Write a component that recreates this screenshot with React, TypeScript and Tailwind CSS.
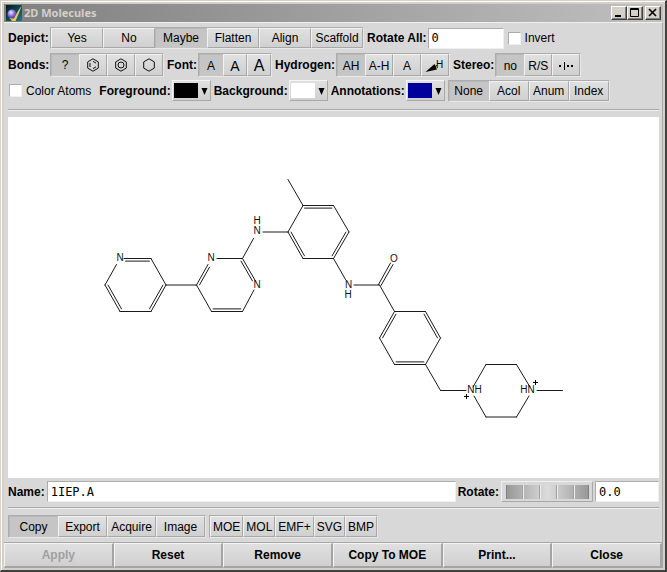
import React, { useState } from "react";
import { clsx } from "clsx";

const SANS = "font-['Liberation_Sans',Arial,sans-serif]";
const MONO = "font-['DejaVu_Sans_Mono','Liberation_Mono',monospace]";
const FIELD =
  "h-[21px] min-w-0 border border-t-[#acacac] border-l-[#acacac] border-b-[#f0f0f0] border-r-[#f0f0f0] bg-white px-[3px] text-[12px] leading-4 text-black outline-none";

type Item = { id: string; face?: React.ReactNode };

function ToggleGroup({
  label,
  items,
  initial,
  itemClass,
  groupClass,
}: {
  label: string;
  items: Item[];
  initial?: string;
  itemClass: string;
  groupClass: string;
}) {
  const [active, setActive] = useState(initial);
  return (
    <div
      role="group"
      aria-label={label}
      className={clsx("flex shrink-0 border border-t-[#acacac] border-l-[#acacac] border-b-[#e8e8e8] border-r-[#e8e8e8]", groupClass)}
    >
      {items.map((item) => (
        <button
          key={item.id}
          type="button"
          aria-label={item.id}
          aria-pressed={item.id === active}
          onClick={() => setActive(item.id)}
          className={clsx(
            "flex items-center justify-center border whitespace-nowrap",
            itemClass,
            item.id === active
              ? "border-[#c6c6c6] border-t-[#b8b8b8] border-l-[#b8b8b8] bg-[#c5c5c5]"
              : "border-t-[#f2f2f2] border-l-[#f2f2f2] border-b-[#a8a8a8] border-r-[#a8a8a8] bg-linear-to-b from-[#e0e0e0] to-[#d0d0d0]",
          )}
        >
          {item.face ?? item.id}
        </button>
      ))}
    </div>
  );
}

function Labelled({ text, textClass, children }: { text: string; textClass?: string; children: React.ReactNode }) {
  return (
    <div className="flex items-center gap-px">
      <span className={clsx("font-bold whitespace-nowrap", textClass)}>{text}</span>
      {children}
    </div>
  );
}

function Hexagon({ kind }: { kind: "kekule" | "circle" | "plain" }) {
  return (
    <svg viewBox="0 0 14 14" className="h-3.5 w-3.5" fill="none" stroke="#111" strokeWidth="1">
      <path d="M7 0.8 12.3 3.9V10.1L7 13.2 1.7 10.1V3.9Z" />
      {kind === "circle" && <circle cx="7" cy="7" r="3" />}
      {kind === "kekule" && <path d="M4 5v4M7 3.4 10 5.1M7 10.6 10 8.9" />}
    </svg>
  );
}

function WedgeH() {
  return (
    <svg viewBox="0 0 20 16" className="h-4 w-5">
      <path d="M0.500 14 9.500 6 12 11.500Z" fill="#000" />
      <path d="M10 8.500 12 7.500" stroke="#000" />
      <text x="11" y="10" fontSize="10" className={SANS}>H</text>
    </svg>
  );
}

function StereoDots() {
  return (
    <svg viewBox="0 0 18 12" className="h-3 w-[18px]" fill="#000">
      <rect x="2" y="5" width="2" height="2" />
      <rect x="7" y="2" width="1" height="8" />
      <rect x="10" y="5" width="2" height="2" />
      <rect x="14" y="5" width="2" height="2" />
    </svg>
  );
}

function ColorSelect({ id, label, swatch, value }: { id: string; label: string; swatch: string; value: string }) {
  return (
    <div className="flex items-center gap-px">
      <label htmlFor={id} className="font-bold whitespace-nowrap">{label}</label>
      <div className="relative h-[21px] w-[39px] border border-t-[#f4f4f4] border-l-[#f4f4f4] border-b-[#a8a8a8] border-r-[#a8a8a8] bg-linear-to-b from-[#e0e0e0] to-[#d0d0d0]">
        <select id={id} defaultValue={value} className="h-full w-full appearance-none bg-transparent text-transparent outline-none">
          <option>{value}</option>
        </select>
        <span className={clsx("pointer-events-none absolute top-0.5 left-px h-[15px] w-6", swatch)} />
        <svg viewBox="0 0 7 7" className="pointer-events-none absolute top-[7px] right-0.5 h-[7px] w-[7px]">
          <path d="M0.500 0h6L3.500 7Z" fill="#000" />
        </svg>
      </div>
    </div>
  );
}

function CheckBox({ label }: { label: string }) {
  return (
    <label className="flex items-center gap-1 whitespace-nowrap">
      <input
        type="checkbox"
        className="ml-px h-[13px] w-[13px] appearance-none border border-t-[#acacac] border-l-[#acacac] border-b-[#f0f0f0] border-r-[#f0f0f0] bg-white checked:bg-[#444]"
      />
      {label}
    </label>
  );
}

function Rule({ className }: { className: string }) {
  return <hr className={clsx("mr-[3px] ml-1 h-0.5 border-0 border-t border-b border-t-[#a8a8a8] border-b-[#f0f0f0]", className)} />;
}

type Pt = [number, number];

/** Second line of a double bond, shifted towards the ring centre and trimmed at both ends. */
function innerLine(a: Pt, b: Pt, c: Pt, offset = 2.6, trim = 1.6): [Pt, Pt] {
  const dx = b[0] - a[0];
  const dy = b[1] - a[1];
  const len = Math.hypot(dx, dy);
  const ux = dx / len;
  const uy = dy / len;
  const side = (c[0] - a[0]) * -uy + (c[1] - a[1]) * ux > 0 ? 1 : -1;
  const nx = -uy * offset * side;
  const ny = ux * offset * side;
  return [
    [a[0] + nx + ux * trim, a[1] + ny + uy * trim],
    [b[0] + nx - ux * trim, b[1] + ny - uy * trim],
  ];
}

const singles: [Pt, Pt][] = [
  [[151, 258.5], [166, 285]],
  [[151, 311.5], [120, 311.5]],
  [[105, 285], [116.5, 264.5]],
  [[166, 285], [196.5, 285]],
  [[217, 258.5], [242.5, 258.5]],
  [[254, 290], [242.5, 311.5]],
  [[211.5, 311.5], [196.5, 285]],
  [[242.5, 258.5], [253.5, 238.5]],
  [[263, 232], [288, 232]],
  [[288, 232], [303, 205.5]],
  [[303, 205.5], [288, 179.5]],
  [[333.5, 205.5], [349, 232]],
  [[333.5, 258.5], [303, 258.5]],
  [[333.5, 258.5], [345.5, 279.5]],
  [[354, 285], [379.5, 285]],
  [[379.5, 285], [394.5, 311.5]],
  [[394.5, 311.5], [425.5, 311.5]],
  [[440.5, 338], [425.5, 364.5]],
  [[394.5, 364.5], [379.5, 338]],
  [[425.5, 364.5], [440.5, 390.5]],
  [[440.5, 390.5], [466, 390.5]],
  [[473, 387], [486, 364.5]],
  [[486, 364.5], [516.5, 364.5]],
  [[516.5, 364.5], [530, 387]],
  [[529, 396], [516.5, 417]],
  [[516.5, 417], [486, 417]],
  [[486, 417], [474, 396]],
  [[537, 390.5], [562.5, 390.5]],
  [[378.5, 284.5], [390.5, 263]],
  [[381, 285.5], [393, 264.5]],
];

const doubles: [Pt, Pt, Pt][] = [
  [[124, 258.5], [151, 258.5], [135, 285]],
  [[166, 285], [151, 311.5], [135, 285]],
  [[120, 311.5], [105, 285], [135, 285]],
  [[196.5, 285], [208, 264.5], [227, 285]],
  [[242.5, 258.5], [255.5, 281], [227, 285]],
  [[242.5, 311.5], [211.5, 311.5], [227, 285]],
  [[303, 205.5], [333.5, 205.5], [318, 232]],
  [[349, 232], [333.5, 258.5], [318, 232]],
  [[303, 258.5], [288, 232], [318, 232]],
  [[379.5, 338], [394.5, 311.5], [410, 338]],
  [[425.5, 311.5], [440.5, 338], [410, 338]],
  [[425.5, 364.5], [394.5, 364.5], [410, 338]],
];

const atoms: [string, number, number][] = [
  ["N", 120, 261],
  ["N", 211, 261],
  ["N", 257, 288],
  ["N", 257, 234],
  ["H", 257, 224],
  ["N", 348.5, 288],
  ["H", 348, 298],
  ["O", 394, 262],
  ["NH", 474.5, 393],
  ["HN", 527.5, 393],
];

function Molecule() {
  const inner = doubles.map(([a, b, c]) => innerLine(a, b, c));
  const outer = doubles.map(([a, b]) => [a, b] as [Pt, Pt]);
  return (
    <svg viewBox="8 117 651 361" className="w-full" role="img" aria-label="1IEP.A">
      <g stroke="#1a1a1a" strokeWidth="1" strokeLinecap="round">
        {[...singles, ...outer, ...inner].map(([a, b], i) => (
          <line key={i} x1={a[0]} y1={a[1]} x2={b[0]} y2={b[1]} />
        ))}
      </g>
      <g fontSize="10" textAnchor="middle" fill="#111" className={SANS}>
        {atoms.map(([t, x, y], i) => (
          <text key={i} x={x} y={y}>{t}</text>
        ))}
      </g>
      <path d="M464 396.5h5M466.5 394v5M533 382.5h5M535.5 380v5" stroke="#000" strokeWidth="1" />
    </svg>
  );
}

function CaptionButton({ label, children }: { label: string; children: React.ReactNode }) {
  return (
    <button
      type="button"
      aria-label={label}
      className="h-3.5 w-4 border border-t-white border-l-white border-b-[#404040] border-r-[#404040] bg-[#d4d0c8] shadow-[inset_-1px_-1px_0_#808080]"
    >
      <svg viewBox="0 0 14 12" className="h-3 w-3.5" fill="none" stroke="#000">{children}</svg>
    </button>
  );
}

function TitleBar() {
  return (
    <header className="flex h-[18px] items-center bg-linear-to-r from-[#808080] to-[#c0c0c0] pr-0.5 pl-0.5">
      <svg viewBox="0 0 16 16" className="h-4 w-4 shrink-0">
        <defs>
          <linearGradient id="appBack" x1="0" y1="0" x2="1" y2="1">
            <stop offset="0" stopColor="#02151c" />
            <stop offset="1" stopColor="#0f7f8c" />
          </linearGradient>
          <radialGradient id="appBall" cx="0.4" cy="0.35" r="0.7">
            <stop offset="0" stopColor="#f1e8ff" />
            <stop offset="0.5" stopColor="#8c73d8" />
            <stop offset="1" stopColor="#3b2a8c" />
          </radialGradient>
        </defs>
        <rect width="16" height="16" fill="url(#appBack)" />
        <path d="M3 12.500 5 11.500 7.500 13 9 16H6Z" fill="#f2c14e" />
        <circle cx="6" cy="9" r="4.500" fill="url(#appBall)" />
        <path d="M16 0.500C13.500 6 12 11 9.500 16H6.500C10 10 12 5 16 0.500Z" fill="#f5c65a" />
      </svg>
      <h1 className="ml-0.5 flex-1 font-['Noto_Sans','Open_Sans',sans-serif] text-[11px] leading-4 font-bold text-[#d4d0c8]">2D Molecules</h1>
      <CaptionButton label="Minimize"><path d="M3 9h6" strokeWidth="2" /></CaptionButton>
      <CaptionButton label="Maximize"><path d="M2.500 1.500h8v8h-8zM2.500 2.500h8" /></CaptionButton>
      <span className="w-0.5" />
      <CaptionButton label="Close"><path d="M3 2 10 9M10 2 3 9" strokeWidth="1.6" /></CaptionButton>
    </header>
  );
}

const toItems = (names: string[]): Item[] => names.map((id) => ({ id }));

export default function App() {
  return (
    <div className={clsx("flex min-h-screen flex-col border-t border-l border-r-2 border-b-2 border-t-[#d4d0c8] border-l-[#d4d0c8] border-r-[#404040] border-b-[#404040] bg-[#d4d0c8] text-[12px] leading-4 text-black", SANS)}>
      <div className="flex flex-1 flex-col border-t border-l border-white pt-0.5 pr-0.5 pb-0.5 pl-0.5">
        <TitleBar />
        <main className="flex flex-1 flex-col border-t border-r border-t-[#f0f0f0] border-r-[#a8a8a8] bg-[#d8d8d8]">
          <div className="ml-1 flex flex-col">
            <div className="mt-1 flex h-[22px] items-center gap-[3px]">
              <Labelled text="Depict:" textClass="w-[41px]">
                <ToggleGroup label="Depict" initial="Maybe" groupClass="h-[22px]" itemClass="w-[52px]" items={toItems(["Yes", "No", "Maybe", "Flatten", "Align", "Scaffold"])} />
              </Labelled>
              <div className="flex items-center gap-px">
                <label htmlFor="rotateAll" className="font-bold">Rotate All:</label>
                <input id="rotateAll" defaultValue="0" className={clsx(FIELD, MONO, "w-[76px]")} />
              </div>
              <CheckBox label="Invert" />
            </div>
            <div className="mt-1 flex h-6 items-center gap-[3px]">
              <Labelled text="Bonds:" textClass="w-[41px]">
                <ToggleGroup
                  label="Bonds"
                  initial="?"
                  groupClass="h-6"
                  itemClass="w-7"
                  items={[
                    { id: "?" },
                    { id: "Alternating", face: <Hexagon kind="kekule" /> },
                    { id: "Aromatic", face: <Hexagon kind="circle" /> },
                    { id: "Plain", face: <Hexagon kind="plain" /> },
                  ]}
                />
              </Labelled>
              <Labelled text="Font:">
                <ToggleGroup
                  label="Font"
                  initial="Small"
                  groupClass="h-6"
                  itemClass="w-6 pt-0.5"
                  items={[
                    { id: "Small", face: <span className="text-[12px]">A</span> },
                    { id: "Medium", face: <span className="text-[14px]">A</span> },
                    { id: "Large", face: <span className="text-[16px]">A</span> },
                  ]}
                />
              </Labelled>
              <Labelled text="Hydrogen:">
                <ToggleGroup
                  label="Hydrogen"
                  initial="AH"
                  groupClass="h-6"
                  itemClass="w-7 pt-0.5"
                  items={[{ id: "AH" }, { id: "A-H" }, { id: "A" }, { id: "Wedge", face: <WedgeH /> }]}
                />
              </Labelled>
              <Labelled text="Stereo:">
                <ToggleGroup label="Stereo" initial="no" groupClass="h-6" itemClass="w-7 pt-0.5" items={[{ id: "no" }, { id: "R/S" }, { id: "Dots", face: <StereoDots /> }]} />
              </Labelled>
            </div>
            <div className="mt-0.5 flex h-[23px] items-center gap-[3px]">
              <CheckBox label="Color Atoms" />
              <span className="w-0.5" />
              <ColorSelect id="fg" label="Foreground:" value="Black" swatch="bg-black" />
              <ColorSelect id="bg" label="Background:" value="White" swatch="bg-white" />
              <ColorSelect id="ann" label="Annotations:" value="Blue" swatch="bg-[#00009c]" />
              <ToggleGroup label="Annotations" initial="None" groupClass="h-[22px]" itemClass="w-10" items={toItems(["None", "Acol", "Anum", "Index"])} />
            </div>
          </div>
          <Rule className="mt-[7px]" />
          <div className="mt-1.5 mr-[3px] ml-1 flex flex-1 items-center bg-white">
            <Molecule />
          </div>
          <div className="mt-[3px] mr-[3px] ml-1 flex items-center gap-0.5">
            <label htmlFor="name" className="font-bold">Name:</label>
            <input id="name" defaultValue="1IEP.A" className={clsx(FIELD, MONO, "flex-1")} />
            <label htmlFor="rotate" className="font-bold">Rotate:</label>
            <div className="flex h-[21px] w-[92px] items-center justify-center border border-t-[#f0f0f0] border-l-[#f0f0f0] border-b-[#a8a8a8] border-r-[#a8a8a8]">
              <input
                id="rotate"
                type="range"
                className="h-3.5 w-[83px] appearance-none border-x border-[#808080] bg-[repeating-linear-gradient(90deg,transparent_0px,transparent_15px,#a0a0a0_15px,#a0a0a0_16px,#eeeeee_16px,#eeeeee_17px),linear-gradient(90deg,#989898,#dcdcdc_50%,#989898)] [&::-webkit-slider-thumb]:opacity-0"
              />
            </div>
            <input aria-label="Rotation angle" defaultValue="0.0" className={clsx(FIELD, MONO, "w-16")} />
          </div>
          <Rule className="mt-[5px]" />
          <div className="mt-1.5 ml-1 flex gap-[3px]">
            <ToggleGroup label="Action" initial="Copy" groupClass="h-[23px]" itemClass="w-[49px]" items={toItems(["Copy", "Export", "Acquire", "Image"])} />
            <ToggleGroup label="Format" groupClass="h-[23px]" itemClass="px-0.5" items={toItems(["MOE", "MOL", "EMF+", "SVG", "BMP"])} />
          </div>
          <footer className="mt-1 grid grid-cols-6 border-t border-[#a8a8a8]">
            {["Apply", "Reset", "Remove", "Copy To MOE", "Print...", "Close"].map((name) => (
              <button
                key={name}
                type="button"
                disabled={name === "Apply"}
                className="h-[25px] border-t border-l border-r-2 border-b-2 border-t-[#f4f4f4] border-l-[#f4f4f4] border-r-[#a4a4a4] border-b-[#a4a4a4] bg-linear-to-b from-[#e0e0e0] to-[#d0d0d0] font-bold disabled:text-[#a0a0a0]"
              >
                {name}
              </button>
            ))}
          </footer>
        </main>
      </div>
    </div>
  );
}
